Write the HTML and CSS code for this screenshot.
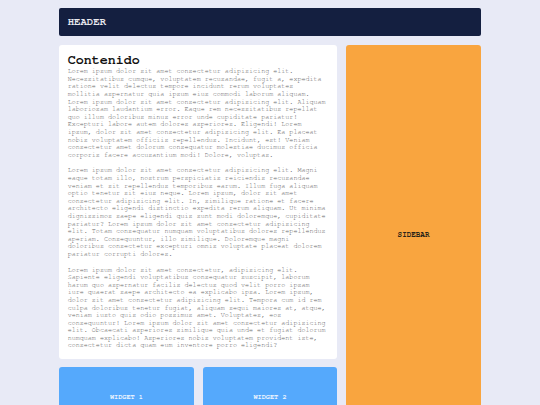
FILE: index.html
```html
<!DOCTYPE html>
<html lang="es">
<head>
<meta charset="utf-8">
<title>Layout</title>
<link rel="stylesheet" href="styles.css">
</head>
<body>
<div class="page">
  <header class="header">HEADER</header>
  <main class="content">
    <h2 class="title">Contenido</h2>
    <p>Lorem ipsum dolor sit amet consectetur adipisicing elit. Necessitatibus cumque, voluptatem recusandae, fugit a, expedita ratione velit delectus tempore incidunt rerum voluptates mollitia aspernatur quia ipsum eius commodi laborum aliquam. Lorem ipsum dolor sit amet consectetur adipisicing elit. Aliquam laboriosam laudantium error. Eaque rem necessitatibus repellat quo illum doloribus minus error unde cupiditate pariatur! Excepturi labore autem dolores asperiores. Eligendi! Lorem ipsum, dolor sit amet consectetur adipisicing elit. Ea placeat nobis voluptatem officiis repellendus. Incidunt, est! Veniam consectetur amet dolorum consequatur molestiae ducimus officia corporis facere accusantium modi! Dolore, voluptas.</p>
    <p>Lorem ipsum dolor sit amet consectetur adipisicing elit. Magni eaque totam illo, nostrum perspiciatis reiciendis recusandae veniam et sit repellendus temporibus earum. Illum fuga aliquam optio tenetur sit eius neque. Lorem ipsum, dolor sit amet consectetur adipisicing elit. In, similique ratione et facere architecto eligendi distinctio expedita rerum aliquam. Ut minima dignissimos saepe eligendi quis sunt modi doloremque, cupiditate pariatur? Lorem ipsum dolor sit amet consectetur adipisicing elit. Totam consequatur numquam voluptatibus dolores repellendus aperiam. Consequuntur, illo similique. Doloremque magni doloribus consectetur excepturi omnis voluptate placeat dolorem pariatur corrupti dolores.</p>
    <p>Lorem ipsum dolor sit amet consectetur, adipisicing elit. Sapiente eligendi voluptatibus consequatur suscipit, laborum harum quo aspernatur facilis delectus quod velit porro ipsam iure quaerat saepe architecto ea explicabo ipsa. Lorem ipsum, dolor sit amet consectetur adipisicing elit. Tempora cum id rem culpa doloribus tenetur fugiat, aliquam sequi maiores at, atque, veniam iusto quis odio possimus amet. Voluptates, eos consequuntur! Lorem ipsum dolor sit amet consectetur adipisicing elit. Obcaecati asperiores similique quia unde et fugiat dolorum numquam explicabo! Asperiores nobis voluptatem provident iste, consectetur dicta quam eum inventore porro eligendi?</p>
  </main>
  <aside class="sidebar">SIDEBAR</aside>
  <div class="widget">WIDGET 1</div>
  <div class="widget">WIDGET 2</div>
</div>
</body>
</html>
```
FILE: styles.css
```css
html, body {
  background: #e8eaf6;
}
body {
  margin: 8px 0;
  font-family: FreeMono, "Liberation Mono", monospace;
  line-height: 1.125;
}
.page {
  width: 422px;
  margin: 0 auto;
  display: grid;
  grid-template-columns: repeat(3, 1fr);
  grid-template-rows: 28px auto 58px;
  gap: 8.67px;
}
.header {
  grid-column: 1 / 4;
  background: #141f40;
  color: #e8e8ee;
  border-radius: 2px;
  font-weight: bold;
  font-size: 10.67px;
  display: flex;
  align-items: center;
  padding: 0 8.67px;
}
.content {
  grid-column: 1 / 3;
  background: #ffffff;
  border-radius: 3px;
  padding: 8.67px;
}
.title {
  margin: 0;
  font-size: 13.33px;
  font-weight: bold;
  color: #111111;
}
.content p {
  margin: 0 0 8px;
  font-size: 6.73px;
  line-height: 7.6px;
  color: #666666;
}
.content p:last-child {
  margin-bottom: 0;
}
.sidebar {
  grid-column: 3;
  grid-row: 2 / 4;
  background: #f9a53f;
  border-radius: 3px;
  color: #2a2418;
  font-weight: bold;
  font-size: 7.6px;
  display: flex;
  align-items: center;
  justify-content: center;
}
.widget {
  background: #55a9fc;
  border-radius: 3px;
  color: #eef5ff;
  font-weight: bold;
  font-size: 6.9px;
  display: flex;
  align-items: center;
  justify-content: center;
}
```
